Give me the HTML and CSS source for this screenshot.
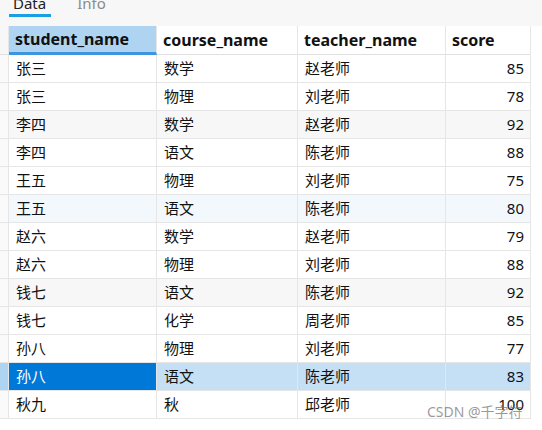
FILE: index.html
```html
<!DOCTYPE html>
<html lang="zh">
<head>
<meta charset="utf-8">
<link rel="stylesheet" href="styles.css">
</head>
<body>
<div class="tabs">
  <span class="tab active">Data</span>
  <span class="tab">Info</span>
</div>
<div class="grid">
  <div class="row head">
    <div class="gut"></div>
    <div class="cell sel">student_name</div>
    <div class="cell">course_name</div>
    <div class="cell">teacher_name</div>
    <div class="cell">score</div>
  </div>
  <div class="row"><div class="gut"></div><div class="cell">张三</div><div class="cell">数学</div><div class="cell">赵老师</div><div class="cell num">85</div></div>
  <div class="row"><div class="gut"></div><div class="cell">张三</div><div class="cell">物理</div><div class="cell">刘老师</div><div class="cell num">78</div></div>
  <div class="row alt"><div class="gut"></div><div class="cell">李四</div><div class="cell">数学</div><div class="cell">赵老师</div><div class="cell num">92</div></div>
  <div class="row"><div class="gut"></div><div class="cell">李四</div><div class="cell">语文</div><div class="cell">陈老师</div><div class="cell num">88</div></div>
  <div class="row"><div class="gut"></div><div class="cell">王五</div><div class="cell">物理</div><div class="cell">刘老师</div><div class="cell num">75</div></div>
  <div class="row hover"><div class="gut"></div><div class="cell">王五</div><div class="cell">语文</div><div class="cell">陈老师</div><div class="cell num">80</div></div>
  <div class="row"><div class="gut"></div><div class="cell">赵六</div><div class="cell">数学</div><div class="cell">赵老师</div><div class="cell num">79</div></div>
  <div class="row"><div class="gut"></div><div class="cell">赵六</div><div class="cell">物理</div><div class="cell">刘老师</div><div class="cell num">88</div></div>
  <div class="row alt"><div class="gut"></div><div class="cell">钱七</div><div class="cell">语文</div><div class="cell">陈老师</div><div class="cell num">92</div></div>
  <div class="row"><div class="gut"></div><div class="cell">钱七</div><div class="cell">化学</div><div class="cell">周老师</div><div class="cell num">85</div></div>
  <div class="row"><div class="gut"></div><div class="cell">孙八</div><div class="cell">物理</div><div class="cell">刘老师</div><div class="cell num">77</div></div>
  <div class="row picked"><div class="gut"></div><div class="cell focus">孙八</div><div class="cell">语文</div><div class="cell">陈老师</div><div class="cell num">83</div></div>
  <div class="row"><div class="gut"></div><div class="cell">秋九</div><div class="cell">秋</div><div class="cell">邱老师</div><div class="cell num">100</div></div>
</div>
<div class="mark">CSDN @千字符</div>
</body>
</html>
```
FILE: styles.css
```css
html, body {
  margin: 0;
  padding: 0;
  background: #ffffff;
}
body {
  width: 542px;
  height: 430px;
  overflow: hidden;
  position: relative;
  font-family: "Noto Sans", "Noto Sans CJK SC", sans-serif;
  color: #111;
}
.tabs {
  height: 26px;
  background: #f7f7f7;
  display: flex;
  align-items: flex-start;
  padding-left: 9px;
  box-sizing: border-box;
}
.tab {
  font-size: 15px;
  line-height: 15px;
  margin-top: -4px;
  height: 17px;
  padding: 0 4px;
  color: #8a8a8a;
  margin-right: 22px;
  box-sizing: content-box;
}
.tab.active {
  color: #222;
  border-bottom: 3px solid #1a9fe3;
  padding: 0 5px 0 4px;
  height: 18px;
}
.grid {
  display: flex;
  flex-direction: column;
}
.row {
  display: grid;
  grid-template-columns: 9px 148px 141px 148px 85px;
  height: 28px;
}
.row.head {
  height: 29px;
}
.gut {
  border-right: 1px solid #e6e6e6;
  border-bottom: 1px solid #e6e6e6;
  background: #fafafa;
}
.head .gut {
  background: #f7f7f7;
  border-bottom: 1px solid #e0e0e0;
}
.cell {
  border-right: 1px solid #e6e6e6;
  border-bottom: 1px solid #e6e6e6;
  font-size: 15px;
  line-height: 27px;
  padding: 0 6px 0 7px;
  white-space: nowrap;
  overflow: hidden;
}
.head .cell {
  font-weight: 700;
  font-size: 16px;
  line-height: 29px;
  padding-left: 6px;
  border-bottom: 1px solid #e0e0e0;
  color: #111;
}
.head .cell.sel {
  background: #afd4f1;
  border-bottom: 3px solid #3d95e0;
  line-height: 27px;
}
.cell.num {
  text-align: right;
}
.row.alt .cell {
  background: #f7f7f7;
}
.row.hover .cell {
  background: #f3f8fd;
}
.row.picked .gut {
  background: #afd4f1;
}
.row.picked .cell {
  background: #c5dff5;
  border-bottom-color: #e6e6e6;
}
.row.picked .cell.focus {
  background: #0078d7;
  color: #ffffff;
}
.mark {
  position: absolute;
  left: 427px;
  top: 403px;
  font-size: 14px;
  line-height: 18px;
  color: rgba(120, 120, 120, 0.75);
  font-family: "Noto Sans", "Noto Sans CJK SC", sans-serif;
}
```
